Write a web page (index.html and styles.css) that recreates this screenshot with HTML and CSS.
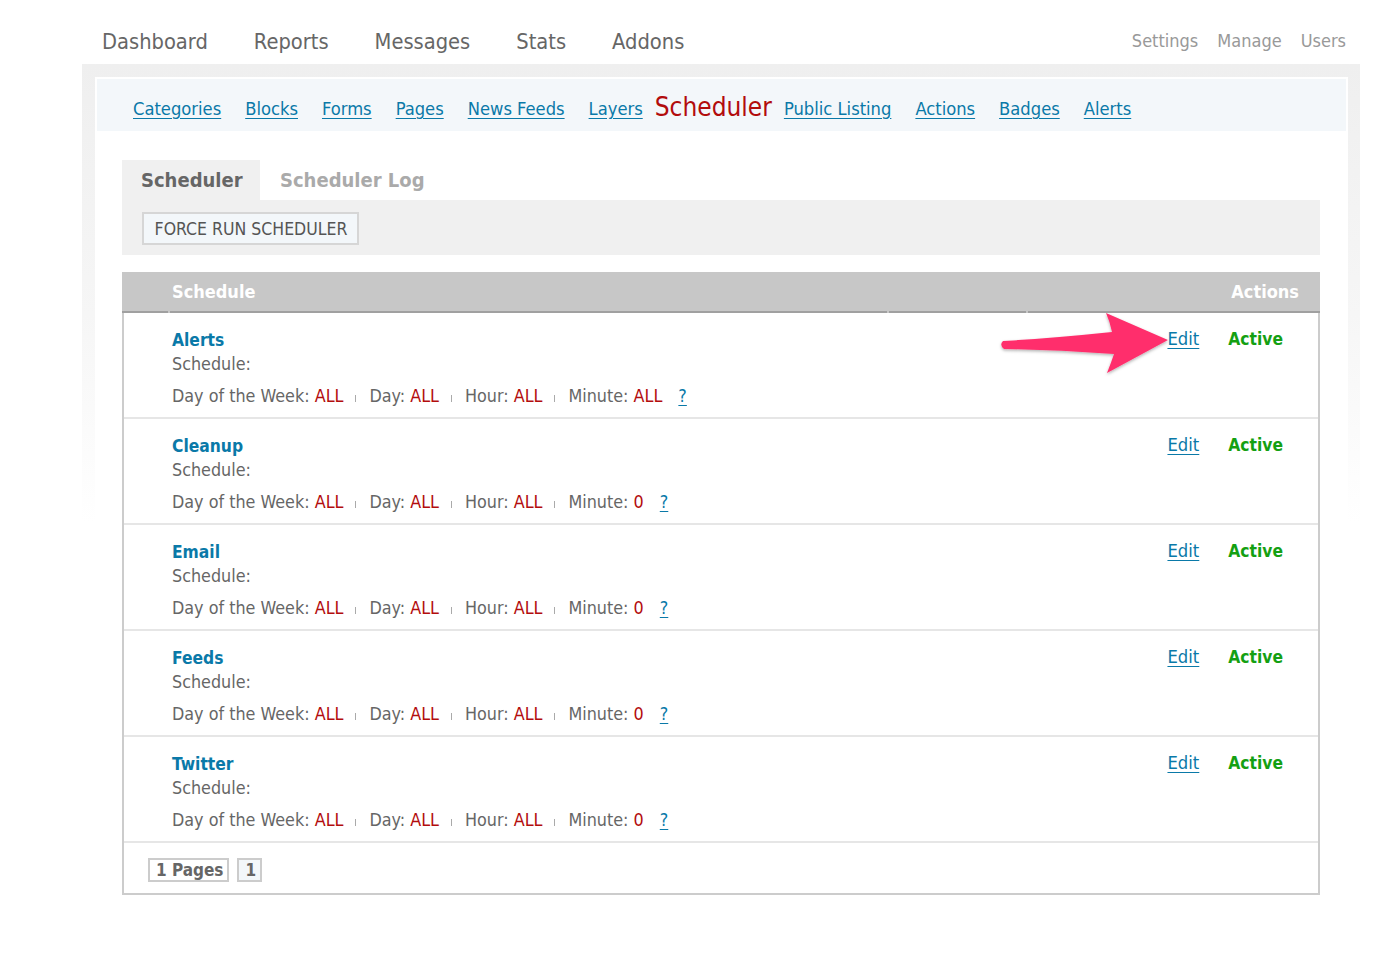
FILE: index.html
```html
<!DOCTYPE html>
<html>
<head>
<meta charset="utf-8">
<link rel="stylesheet" href="styles.css">
</head>
<body>
<div class="topbar">
  <nav class="mainnav">
    <a>Dashboard</a><a>Reports</a><a>Messages</a><a>Stats</a><a>Addons</a>
  </nav>
  <nav class="usernav">
    <a>Settings</a><a>Manage</a><a>Users</a>
  </nav>
</div>
<div class="panel">
  <div class="inner">
    <div class="subnav">
      <a class="sublink">Categories</a>
      <a class="sublink">Blocks</a>
      <a class="sublink">Forms</a>
      <a class="sublink">Pages</a>
      <a class="sublink">News Feeds</a>
      <a class="sublink">Layers</a>
      <span class="current">Scheduler</span>
      <a class="sublink">Public Listing</a>
      <a class="sublink">Actions</a>
      <a class="sublink">Badges</a>
      <a class="sublink">Alerts</a>
    </div>
    <div class="content">
      <div class="tabs">
        <div class="tab active">Scheduler</div>
        <div class="tab">Scheduler Log</div>
      </div>
      <div class="toolbar">
        <button class="btn">FORCE RUN SCHEDULER</button>
      </div>
      <div class="table">
        <div class="thead">
          <div class="c1"></div>
          <div class="c2">Schedule</div>
          <div class="c3"></div>
          <div class="c4">Actions</div>
        </div>

        <div class="row">
          <div class="c1"></div>
          <div class="c2">
            <div class="name">Alerts</div>
            <div class="sched">Schedule:</div>
            <div class="details">Day of the Week: <b>ALL</b><i class="sep"></i>Day: <b>ALL</b><i class="sep"></i>Hour: <b>ALL</b><i class="sep"></i>Minute: <b>ALL</b><a class="help">?</a></div>
          </div>
          <div class="c3"></div>
          <div class="c4"><a class="edit">Edit</a><span class="active-lbl">Active</span></div>
        </div>

        <div class="row">
          <div class="c1"></div>
          <div class="c2">
            <div class="name">Cleanup</div>
            <div class="sched">Schedule:</div>
            <div class="details">Day of the Week: <b>ALL</b><i class="sep"></i>Day: <b>ALL</b><i class="sep"></i>Hour: <b>ALL</b><i class="sep"></i>Minute: <b>0</b><a class="help">?</a></div>
          </div>
          <div class="c3"></div>
          <div class="c4"><a class="edit">Edit</a><span class="active-lbl">Active</span></div>
        </div>

        <div class="row">
          <div class="c1"></div>
          <div class="c2">
            <div class="name">Email</div>
            <div class="sched">Schedule:</div>
            <div class="details">Day of the Week: <b>ALL</b><i class="sep"></i>Day: <b>ALL</b><i class="sep"></i>Hour: <b>ALL</b><i class="sep"></i>Minute: <b>0</b><a class="help">?</a></div>
          </div>
          <div class="c3"></div>
          <div class="c4"><a class="edit">Edit</a><span class="active-lbl">Active</span></div>
        </div>

        <div class="row">
          <div class="c1"></div>
          <div class="c2">
            <div class="name">Feeds</div>
            <div class="sched">Schedule:</div>
            <div class="details">Day of the Week: <b>ALL</b><i class="sep"></i>Day: <b>ALL</b><i class="sep"></i>Hour: <b>ALL</b><i class="sep"></i>Minute: <b>0</b><a class="help">?</a></div>
          </div>
          <div class="c3"></div>
          <div class="c4"><a class="edit">Edit</a><span class="active-lbl">Active</span></div>
        </div>

        <div class="row">
          <div class="c1"></div>
          <div class="c2">
            <div class="name">Twitter</div>
            <div class="sched">Schedule:</div>
            <div class="details">Day of the Week: <b>ALL</b><i class="sep"></i>Day: <b>ALL</b><i class="sep"></i>Hour: <b>ALL</b><i class="sep"></i>Minute: <b>0</b><a class="help">?</a></div>
          </div>
          <div class="c3"></div>
          <div class="c4"><a class="edit">Edit</a><span class="active-lbl">Active</span></div>
        </div>

        <div class="tfoot">
          <span class="pg">1 Pages</span><span class="pg cur">1</span>
        </div>
      </div>
    </div>
  </div>
</div>
<svg class="arrow" width="1398" height="958" viewBox="0 0 1398 958">
  <defs>
    <filter id="sh" x="-20%" y="-20%" width="140%" height="140%">
      <feDropShadow dx="0" dy="1.5" stdDeviation="1.5" flood-color="#000" flood-opacity="0.3"/>
    </filter>
  </defs>
  <path filter="url(#sh)" fill="#ff2f6c" d="M1003,341 Q1055,338 1112,332 Q1110,322 1106,313 L1168,340 L1107,373 Q1111,363 1114,354 Q1058,350 1004,349 Q999,345 1003,341 Z"/>
</svg>
</body>
</html>
```
FILE: styles.css
```css
* { box-sizing: border-box; }
body {
  margin: 0;
  background: #fff;
  font-family: "DejaVu Sans Condensed", "DejaVu Sans", sans-serif;
  color: #666;
  position: relative;
}
a { cursor: pointer; }

.topbar {
  height: 64px;
  display: flex;
  justify-content: space-between;
  align-items: flex-end;
  padding: 0 52px 10px 102px;
}
.mainnav { display: flex; gap: 46px; }
.mainnav a { font-size: 21.7px; color: #666; line-height: 24px; }
.usernav { display: flex; gap: 19px; padding-bottom: 2px; }
.usernav a { font-size: 18px; color: #999; line-height: 22px; }

.panel {
  margin-left: 82px;
  width: 1278px;
  padding: 13px 12px 0 13px;
  background: linear-gradient(#efefef 0, #f6f6f6 250px, #fff 460px);
}
.inner {
  background: #fff;
  padding: 2px 2px 0 2px;
}
.subnav {
  height: 52px;
  background: #f3f7fa;
  display: flex;
  align-items: center;
  padding: 8px 0 0 24px;
}
.sublink {
  font-size: 18.2px;
  color: #0a79a8;
  text-decoration: underline;
  text-underline-offset: 3px;
  padding: 0 12px;
  line-height: 22px;
}
.current {
  font-size: 26px;
  color: #b20c0c;
  line-height: 28px;
  margin-top: -4px;
  padding: 0;
}

.content {
  padding: 29px 26px 0 25px;
}
.tabs { display: flex; height: 40px; }
.tab {
  font-size: 20px;
  font-weight: bold;
  color: #aaa;
  padding: 0 20px;
  line-height: 40px;
}
.tab.active { background: #f0f0f0; color: #666; padding: 0 19px 0 19px; width: 138px; }
.toolbar {
  background: #f0f0f0;
  height: 55px;
  padding: 12px 20px;
}
.btn {
  font-family: inherit;
  font-size: 17.5px;
  color: #555;
  background: #f3f7fa;
  border: 2px solid #d6d6d6;
  height: 33px;
  width: 217px;
  padding: 0 0 0 1px;
  border-radius: 0;
  white-space: nowrap;
}

.table {
  margin-top: 17px;
  border: 2px solid #cccccc;
  border-top: 0;
}
.thead {
  display: flex;
  background: #c7c7c7;
  margin: 0 -2px;
  height: 41px;
  color: #fff;
  font-weight: bold;
  font-size: 18px;
  line-height: 39px;
  gap: 2px;
}
.thead > div { border-bottom: 2px solid #a0a0a0; }
.c1 { width: 46px; flex: none; }
.c2 { flex: 1; padding-left: 2px; }
.c3 { width: 137px; flex: none; }
.c4 { width: 292px; flex: none; text-align: right; padding-right: 21px; }
.thead .c1 { width: 46px; }
.thead .c2 { padding-left: 2px; }

.row {
  display: flex;
  border-bottom: 2px solid #e6e6e6;
  padding: 15px 0 9px;
  font-size: 17.8px;
}
.name { font-weight: bold; color: #0a79a8; line-height: 24px; font-size: 17.3px; }
.sched { line-height: 24px; }
.details { line-height: 24px; margin-top: 8px; white-space: nowrap; }
.details b { font-weight: normal; color: #b30d0d; }
.sep {
  display: inline-block;
  width: 1px;
  height: 7px;
  background: #aaa;
  margin: 0 13px 0 12px;
  vertical-align: 0;
}
.help {
  color: #0a79a8;
  text-decoration: underline;
  text-underline-offset: 3px;
  margin-left: 16px;
}
.row .c4 { padding-right: 35px; line-height: 22px; }
.edit {
  color: #0a79a8;
  text-decoration: underline;
  text-underline-offset: 3px;
  margin-right: 29px;
  font-size: 18.3px;
}
.active-lbl { color: #14a012; font-weight: bold; font-size: 17.3px; }

.tfoot {
  padding: 15px 24px 11px;
  display: flex;
  gap: 8px;
}
.pg {
  display: inline-block;
  border: 2px solid #cccccc;
  font-size: 17px;
  font-weight: bold;
  color: #666;
  height: 24px;
  line-height: 20px;
  padding: 0 4px 0 6px;
}
.pg.cur { background: #f3f7fa; }

.arrow {
  position: absolute;
  left: 0;
  top: 0;
  pointer-events: none;
}
```
